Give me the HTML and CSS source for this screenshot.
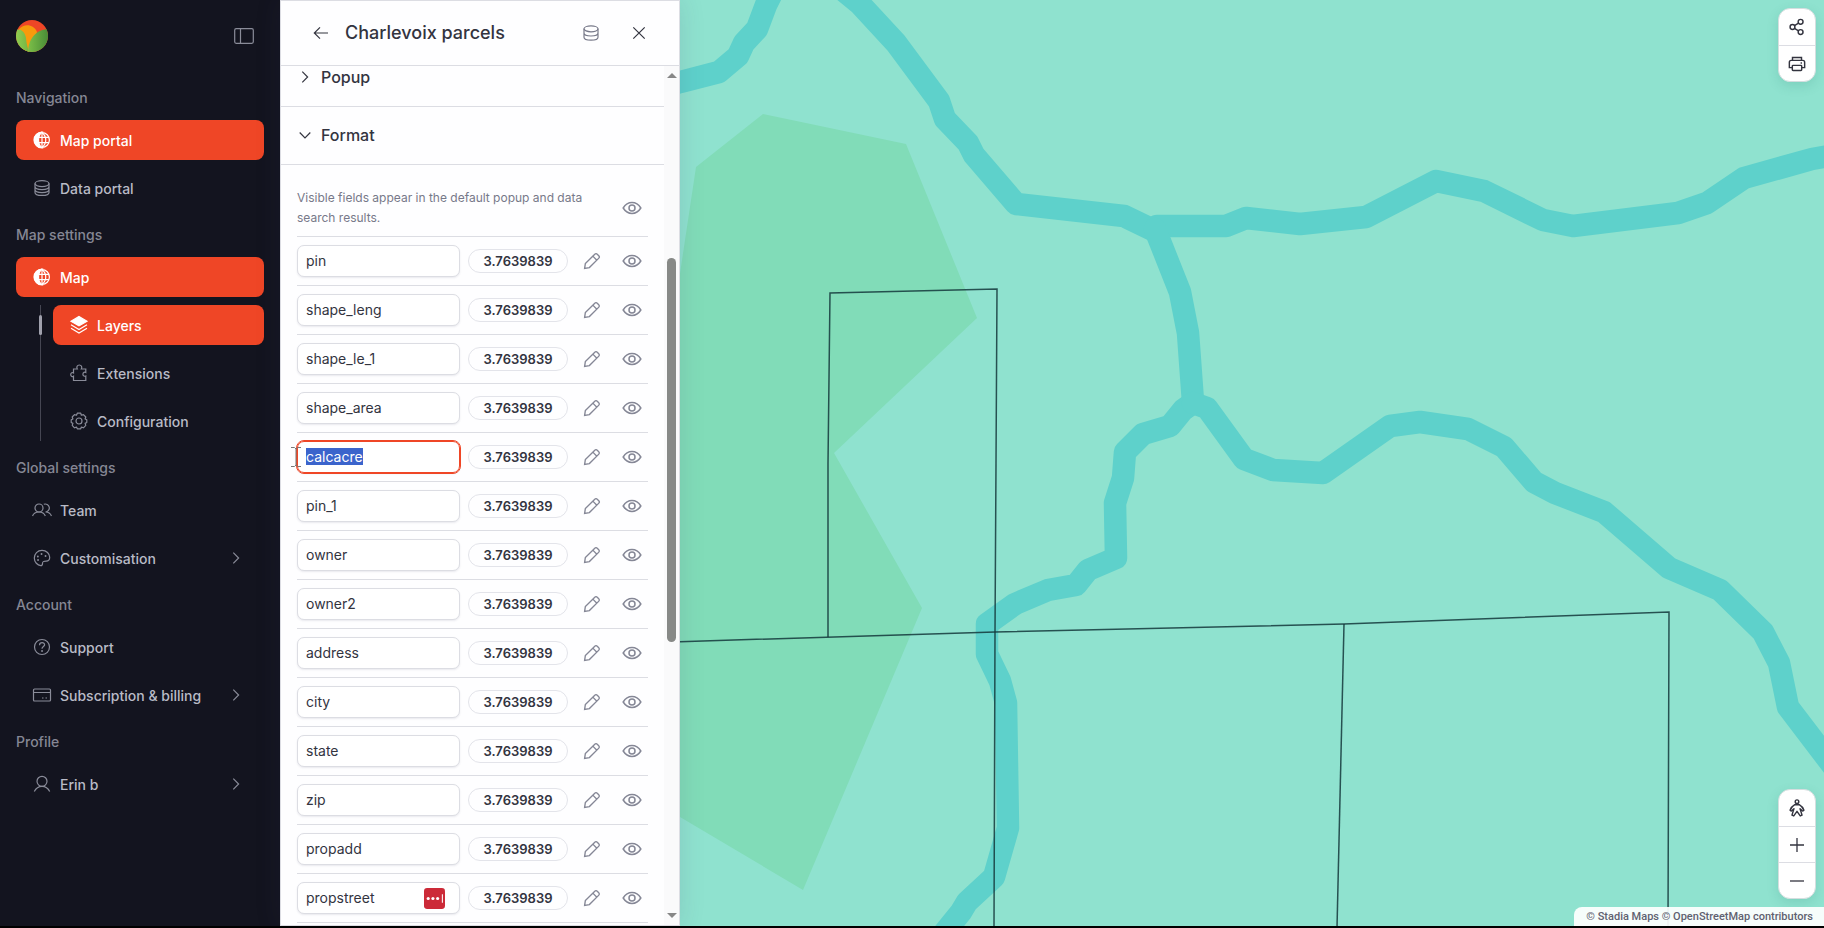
FILE: index.html
```html
<!DOCTYPE html>
<html lang="en">
<head>
    <meta charset="UTF-8">
    <meta name="viewport" content="width=device-width, initial-scale=1.0">
    <title>Charlevoix parcels</title>
    <link rel="stylesheet" href="styles.css">
</head>
<body>
    <svg class="sprite" aria-hidden="true">
        <symbol id="i-sidebar" viewBox="0 0 20 20"><rect x=".7" y="2.7" width="18.6" height="14.6" rx="1.5"/><path d="M6.5 3v14"/></symbol>
        <symbol id="i-globe" viewBox="0 0 20 20"><circle cx="10" cy="10" r="7.4"/><path d="M10 2.5c5 4 5 11 0 15M10 2.5v15M6 7.4h11M6 12.6h11"/><path class="solid" d="M10 2a8 8 0 0 0 0 16c-4.600-4-4.600-12 0-16z"/></symbol>
        <symbol id="i-data" viewBox="0 0 20 20"><ellipse cx="10" cy="5.600" rx="7" ry="3"/><path d="M3 5.600v8.800c0 4 14 4 14 0V5.600M3 8.600c0 4 14 4 14 0M3 11.600c0 4 14 4 14 0"/></symbol>
        <symbol id="i-database" viewBox="0 0 20 20"><ellipse cx="10" cy="5.800" rx="7" ry="3"/><path d="M3 5.800v8.400c0 4 14 4 14 0V5.800M3 10c0 4 14 4 14 0"/></symbol>
        <symbol id="i-layers" viewBox="0 0 20 20"><path class="solid" d="M10 1.500l8 4.700-8 4.700-8-4.700z"/><path d="M2 9.800l8 4.700 8-4.700M2 13.300l8 4.700 8-4.700"/></symbol>
        <symbol id="i-puzzle" viewBox="0 0 20 20"><path d="M4.500 17.500v-4.200c-1 .8-2.800.2-2.800-1.700s1.800-2.500 2.800-1.700V6h3.800C7.200 4.200 8.200 2 10.300 2s3.100 2.200 2 4h4.500v3.500c-1-.6-2.900-.2-2.900 1.700s1.900 2.400 2.900 1.800v4.500z"/></symbol>
        <symbol id="i-gear" viewBox="0 0 20 20"><circle cx="10" cy="10" r="3"/><path d="M8.300 2.200h3.400l.7 2 2-.6 2.400 2.400-.7 2 1.700.8v2.700l-1.700.9.700 2-2.400 2.400-2-.7-.7 1.700H8.300l-.8-1.700-2 .7-2.300-2.400.7-2-1.700-.9V8.800l1.700-.8-.7-2 2.300-2.400 2 .6z" stroke-linejoin="round"/></symbol>
        <symbol id="i-team" viewBox="0 0 20 20"><circle cx="7" cy="8" r="4"/><path d="M.5 16c1-2.700 3.500-4 6.500-4s5.300 1.300 6.300 4M11.800 4.300a4 4 0 1 1 1.700 7.700c3 0 5 1.300 6 4"/></symbol>
        <symbol id="i-palette" viewBox="0 0 20 20"><path d="M10 2.300c4.500 0 7.700 3.400 7.700 7 0 2.500-1.500 3.800-3.500 3.800-3 0-3.700.3-3.700 2.300 0 1.500-.7 2.200-1.700 2.200-3.300-.3-6.500-3.400-6.500-7.500 0-4.400 3.300-7.800 7.700-7.800z"/><path class="dots" d="M6 12h.1M5.800 8.500h.1M9.500 6h.1M13.500 8h.1"/></symbol>
        <symbol id="i-help" viewBox="0 0 20 20"><circle cx="10" cy="10" r="7.500"/><path d="M7.500 8.200c0-3.500 5.300-3.300 5.100-.3-.1 1.700-2.600 1.700-2.600 3.900"/><path class="dots" d="M10 14h.1"/></symbol>
        <symbol id="i-card" viewBox="0 0 20 20"><rect x="1.500" y="4" width="17" height="12" rx="1"/><path d="M1.500 7.500h17M10 13h1.500M13.500 13H15"/></symbol>
        <symbol id="i-user" viewBox="0 0 20 20"><circle cx="10" cy="7.300" r="5"/><path d="M2.300 17.500c1.700-3.500 4.500-5.200 7.700-5.200s6 1.700 7.700 5.200"/></symbol>
        <symbol id="i-right" viewBox="0 0 20 20"><path d="M7.300 4.700l5.300 5.300-5.300 5.300"/></symbol>
        <symbol id="i-down" viewBox="0 0 20 20"><path d="M4.700 7.500l5.300 5.300 5.300-5.300"/></symbol>
        <symbol id="i-back" viewBox="0 0 20 20"><path d="M17 10H3.300M9 4.300L3.300 10 9 15.700"/></symbol>
        <symbol id="i-close" viewBox="0 0 20 20"><path d="M4.300 4.300l11.400 11.400M15.700 4.300L4.300 15.700"/></symbol>
        <symbol id="i-eye" viewBox="0 0 20 20"><path d="M1.200 10c4.400-7.200 13.200-7.200 17.600 0-4.400 7.200-13.200 7.200-17.600 0z"/><circle cx="10" cy="10" r="3"/></symbol>
        <symbol id="i-pencil" viewBox="0 0 20 20"><path d="M1.800 18.200l.8-5.300L13.100 2.400c1-1 2-.6 2.700.1l1.700 1.700c.8.800.9 1.800.1 2.600L7.100 17.300zM10.900 4.600l4.500 4.500"/></symbol>
        <symbol id="i-share" viewBox="0 0 20 20"><circle cx="5" cy="10" r="2.700"/><circle cx="14" cy="4.200" r="2.700"/><circle cx="14" cy="15.600" r="2.700"/><path d="M7.200 8.500l4.500-2.800M7.200 11.500l4.500 2.700"/></symbol>
        <symbol id="i-print" viewBox="0 0 20 20"><path d="M5 6V2.700h10V6M5 14H1.500V8.300C1.500 7 2.300 6 3.500 6h13c1.200 0 2 1 2 2.300V14H15"/><rect x="4.800" y="11.500" width="10.400" height="5.800" rx=".8"/><path d="M14 8.800h1.500"/></symbol>
        <symbol id="i-person" viewBox="0 0 20 20"><circle cx="10" cy="3" r="2"/><path d="M7.500 6.300h5c2.600 1.500 4.300 3.700 5.200 6.200l-1.400.9-2.900-2.500 2.200 7-2 .9L10 13.700l-3.600 5.100-2-.9 2.200-7-2.900 2.500-1.400-.9c.9-2.500 2.600-4.700 5.200-6.200z" stroke-linejoin="round"/></symbol>
        <symbol id="i-plus" viewBox="0 0 20 20"><path d="M3 10h14M10 3v14"/></symbol>
        <symbol id="i-minus" viewBox="0 0 20 20"><path d="M3 10h14"/></symbol>
    </svg>

    <div class="app">
        <aside class="sidebar">
            <div class="sidebar-top">
                <svg class="logo" viewBox="0 0 32 32" aria-hidden="true">
                    <defs>
                        <clipPath id="logoClip"><circle cx="16" cy="16" r="16"/></clipPath>
                        <linearGradient id="leafLeft"><stop offset="0" stop-color="#93cf51"/><stop offset="1" stop-color="#72b443"/></linearGradient>
                        <linearGradient id="leafRight"><stop offset="0" stop-color="#7cbf48"/><stop offset="1" stop-color="#468a36"/></linearGradient>
                    </defs>
                    <g clip-path="url(#logoClip)">
                        <rect width="32" height="32" fill="#ee4626"/>
                        <path d="M3 9C8 3 18 4 21 12l-8 20H5z" fill="#f79a0c"/>
                        <path d="M-1 10c5-2 10 1 11 8 .5 4 .5 6 3 14H0z" fill="url(#leafLeft)"/>
                        <path d="M33 9c-10 0-21 7-21 24h21z" fill="url(#leafRight)"/>
                    </g>
                </svg>
                <button class="icon-btn" aria-label="Collapse sidebar"><svg class="icon"><use href="#i-sidebar"/></svg></button>
            </div>
            <nav>
                <h2 class="nav-label">Navigation</h2>
                <a class="nav-item active" href="#"><svg class="icon"><use href="#i-globe"/></svg>Map portal</a>
                <a class="nav-item" href="#"><svg class="icon"><use href="#i-data"/></svg>Data portal</a>

                <h2 class="nav-label">Map settings</h2>
                <a class="nav-item active" href="#"><svg class="icon"><use href="#i-globe"/></svg>Map</a>
                <div class="subnav">
                    <a class="nav-item active" href="#"><svg class="icon"><use href="#i-layers"/></svg>Layers</a>
                    <a class="nav-item" href="#"><svg class="icon"><use href="#i-puzzle"/></svg>Extensions</a>
                    <a class="nav-item" href="#"><svg class="icon"><use href="#i-gear"/></svg>Configuration</a>
                </div>

                <h2 class="nav-label">Global settings</h2>
                <a class="nav-item" href="#"><svg class="icon"><use href="#i-team"/></svg>Team</a>
                <a class="nav-item" href="#"><svg class="icon"><use href="#i-palette"/></svg>Customisation<svg class="icon chevron"><use href="#i-right"/></svg></a>

                <h2 class="nav-label">Account</h2>
                <a class="nav-item" href="#"><svg class="icon"><use href="#i-help"/></svg>Support</a>
                <a class="nav-item" href="#"><svg class="icon"><use href="#i-card"/></svg>Subscription &amp; billing<svg class="icon chevron"><use href="#i-right"/></svg></a>

                <h2 class="nav-label">Profile</h2>
                <a class="nav-item" href="#"><svg class="icon"><use href="#i-user"/></svg>Erin b<svg class="icon chevron"><use href="#i-right"/></svg></a>
            </nav>
        </aside>

        <section class="panel">
            <header class="panel-header">
                <button class="icon-btn" aria-label="Back"><svg class="icon"><use href="#i-back"/></svg></button>
                <h1>Charlevoix parcels</h1>
                <button class="icon-btn data" aria-label="Open data"><svg class="icon"><use href="#i-database"/></svg></button>
                <button class="icon-btn" aria-label="Close"><svg class="icon"><use href="#i-close"/></svg></button>
            </header>
            <div class="panel-body">
                <div class="panel-scroll">
                    <div class="panel-content">
                        <button class="section-toggle"><svg class="icon"><use href="#i-right"/></svg>Popup</button>
                        <button class="section-toggle"><svg class="icon"><use href="#i-down"/></svg>Format</button>
                        <div class="fields">
                            <div class="fields-intro">
                                <p>Visible fields appear in the default popup and data search results.</p>
                                <button class="icon-btn eye" aria-label="Toggle all fields"><svg class="icon"><use href="#i-eye"/></svg></button>
                            </div>
                            <div id="fieldRows"></div>
                        </div>
                    </div>
                </div>
                <div class="scrollbar" aria-hidden="true">
                    <span class="arrow up"></span>
                    <span class="gap-above"></span>
                    <span class="thumb"></span>
                    <span class="gap-below"></span>
                    <span class="arrow down"></span>
                </div>
            </div>
        </section>

        <main class="map">
            <svg class="map-canvas" viewBox="680 0 1144 926" preserveAspectRatio="xMinYMin slice" role="img" aria-label="Parcel map">
                <path class="park" d="M696 167L763 114 906 144 977 318 834 453 922 608 803 890 670 811V340z"/>
                <g class="river">
                    <path d="M776-15L766 5 757 29 744 43 738 56 719 72 680 82 660 88"/>
                    <path d="M838-14L860 4 896 43 939 101 945 119 968 143 974 155 1016 204 1124 216 1153 230"/>
                    <path d="M1157 226H1226L1246 218 1300 224 1366 217 1436 181 1484 191 1543 220 1573 226 1678 213 1707 203 1744 178 1812 159 1840 154"/>
                    <path d="M1155 229L1180 292 1188 333 1193 402"/>
                    <path d="M1190 405L1183 410 1170 426 1143 434 1125 452 1123 478 1115 503 1116 558 1088 570 1076 585 1048 590 1015 604 987 624V654L1000 681 1006 703 1008 828 994 877 967 902 961 912 940 938"/>
                    <path d="M1193 403L1207 408 1244 459 1273 470 1323 473 1390 426 1420 422 1468 429 1504 447 1534 482 1555 493 1604 512 1669 568 1720 590 1763 632 1779 663 1788 707 1836 770"/>
                </g>
                <g class="parcel">
                    <path d="M828 637V464L830 293 997 289 996 464 995 632 994 928"/>
                    <path d="M670 642L995 632 1260 626 1344 624 1669 612 1668 928"/>
                    <path d="M1344 624L1337 928"/>
                </g>
            </svg>
            <div class="controls top">
                <button aria-label="Share"><svg class="icon"><use href="#i-share"/></svg></button>
                <button aria-label="Print"><svg class="icon"><use href="#i-print"/></svg></button>
            </div>
            <div class="controls bottom">
                <button aria-label="Street view"><svg class="icon"><use href="#i-person"/></svg></button>
                <button aria-label="Zoom in"><svg class="icon zoom"><use href="#i-plus"/></svg></button>
                <button aria-label="Zoom out"><svg class="icon zoom"><use href="#i-minus"/></svg></button>
            </div>
            <div class="attribution"><a href="#">© Stadia Maps</a> <a href="#">© OpenStreetMap contributors</a></div>
        </main>
    </div>

    <script>
        const fields = ['pin', 'shape_leng', 'shape_le_1', 'shape_area', 'calcacre', 'pin_1', 'owner',
            'owner2', 'address', 'city', 'state', 'zip', 'propadd', 'propstreet'];

        // Autofill badge of the password manager
        const autofill = `
            <svg class="autofill" viewBox="0 0 20 20" aria-hidden="true">
                <rect width="20" height="20" rx="3"/>
                <circle cx="4" cy="10" r="1.500"/><circle cx="8.500" cy="10" r="1.500"/><circle cx="13" cy="10" r="1.500"/>
                <path d="M17.500 6v8"/>
            </svg>`;

        // I-beam pointer at the start of the edited field
        const pointer = `
            <svg class="pointer" viewBox="0 0 10 20" aria-hidden="true">
                <path d="M0 .5h3.500L5 2l1.500-1.500H10M0 19.500h3.500L5 18l1.500 1.500H10M5 2v16"/>
            </svg>`;

        document.getElementById('fieldRows').innerHTML = fields.map(name => `
            <div class="field-row">
                <div class="field">
                    <input type="text" id="field-${name}" value="${name}" aria-label="Label for ${name}" spellcheck="false">
                    ${name === 'propstreet' ? autofill : ''}
                    ${name === 'calcacre' ? pointer : ''}
                </div>
                <button class="format">3.7639839</button>
                <button class="icon-btn pencil" aria-label="Edit ${name}"><svg class="icon"><use href="#i-pencil"/></svg></button>
                <button class="icon-btn eye" aria-label="Toggle ${name}"><svg class="icon"><use href="#i-eye"/></svg></button>
            </div>`).join('');

        const current = document.getElementById('field-calcacre');
        current.focus({ preventScroll: true });
        current.select();
    </script>
</body>
</html>
```
FILE: styles.css
```css
* {
    box-sizing: border-box;
}
body {
    margin: 0;
    background: #000;
    color: #33343f;
    font-family: Inter, "Liberation Sans", sans-serif;
    font-size: 14px;
}
h1, h2, p {
    margin: 0;
    font-weight: 500;
}
a {
    color: inherit;
    text-decoration: none;
}
button {
    font: inherit;
    color: inherit;
    background: none;
    border: 0;
    padding: 0;
    cursor: pointer;
}
.sprite {
    display: none;
}
.icon {
    display: block;
    flex: none;
    width: 20px;
    height: 20px;
    fill: none;
    stroke: currentColor;
    stroke-width: 1.2;
}
.solid {
    fill: currentColor;
}
.dots {
    stroke-width: 1.8;
    stroke-linecap: round;
}
.icon-btn {
    flex: none;
}
.app {
    display: flex;
    height: calc(100vh - 2px);
    overflow: hidden;
}

/* Sidebar */
.sidebar {
    flex: none;
    width: 280px;
    padding: 20px 16px;
    background: #13141f;
    color: #b9bbc6;
}
.sidebar-top {
    display: flex;
    align-items: center;
    justify-content: space-between;
    height: 32px;
    margin-bottom: 23px;
    padding-right: 10px;
}
.sidebar-top .icon-btn {
    color: #8a8c99;
}
.logo {
    width: 32px;
    height: 32px;
}
.nav-label {
    height: 41px;
    line-height: 46px;
    font-size: 14px;
    font-weight: 500;
    color: #858794;
}
.nav-item {
    display: flex;
    align-items: center;
    gap: 8px;
    height: 40px;
    margin: 4px 0;
    padding: 0 18px 0 16px;
    border-radius: 8px;
    font-size: 14px;
    font-weight: 500;
}
.nav-item + .nav-item,
.nav-item + .subnav {
    margin-top: 8px;
}
.nav-item .icon {
    color: #8a8c99;
}
.nav-item.active,
.nav-item.active .icon {
    color: #fff;
}
.nav-item.active {
    background: #ef4626;
}
.chevron {
    margin-left: auto;
}
.subnav {
    position: relative;
    margin-left: 24px;
    padding-left: 12px;
    border-left: 1px solid #454652;
}
.subnav .nav-item:first-child {
    margin-top: 0;
}
.subnav::before {
    content: "";
    position: absolute;
    left: -2px;
    top: 10px;
    width: 3px;
    height: 20px;
    border-radius: 2px;
    background: #a0a1ad;
}

/* Layer panel */
.panel {
    display: flex;
    flex-direction: column;
    flex: none;
    width: 400px;
    background: #fefeff;
    border: 1px solid #dcdde3;
    position: relative;
    box-shadow: 0 0 24px rgba(60, 60, 100, 0.14);
    z-index: 1;
}
.panel-header {
    display: flex;
    align-items: center;
    flex: none;
    height: 65px;
    padding: 0 30px;
    border-bottom: 1px solid #dcdde3;
    gap: 28px;
}
.panel-header h1 {
    flex: 1;
    margin-left: -14px;
    font-size: 18px;
    line-height: 24px;
}
.panel-header .data {
    color: #777989;
}
.panel-body {
    display: flex;
    flex: 1;
    min-height: 0;
}
.panel-scroll {
    flex: 1;
    overflow: hidden;
}
/* scrolled part of the way into the Popup heading */
.panel-content {
    margin-top: -17px;
}
.section-toggle {
    display: flex;
    align-items: center;
    gap: 6px;
    width: 100%;
    height: 58px;
    padding: 0 14px 2px;
    border-bottom: 1px solid #dcdde3;
    font-size: 16px;
    font-weight: 500;
}
.fields {
    padding: 22px 16px 0;
}
.fields-intro,
.field-row {
    display: flex;
    align-items: center;
    width: 100%;
    border-bottom: 1px solid #dcdde3;
}
.fields-intro {
    justify-content: space-between;
    height: 50px;
    padding: 0 6px 7px 0;
}
.fields-intro p {
    width: 300px;
    font-size: 12px;
    line-height: 20px;
    font-weight: 400;
    color: #777989;
}
.field-row {
    height: 49px;
    padding: 0 6px 1px 0;
}
.field {
    position: relative;
    width: 163px;
}
.field input {
    display: block;
    width: 100%;
    height: 32px;
    padding: 0 8px;
    border: 1px solid #dcdde3;
    border-radius: 7px;
    background: #fff;
    box-shadow: 0 1px 2px rgba(50, 50, 90, 0.1);
    color: #33343f;
    font: 400 14px/22px Inter, "Liberation Sans", sans-serif;
}
.field input:focus {
    outline: 1px solid #ef4626;
    border-color: #ef4626;
}
.field input::selection {
    background: rgba(57, 98, 203, 0.99);
    color: #fff;
}
.autofill {
    position: absolute;
    top: 6px;
    right: 15px;
    width: 21px;
    height: 21px;
    fill: #fff;
    stroke: none;
}
.autofill rect {
    fill: #cc2a38;
}
.autofill path {
    stroke: #fff;
}
.pointer {
    position: absolute;
    top: 6px;
    left: -6px;
    width: 10px;
    height: 20px;
    fill: none;
    stroke: #777;
}
.format {
    width: 100px;
    height: 24px;
    margin: 0 15px 0 8px;
    border: 1px solid #e3e4ea;
    border-radius: 12px;
    font-size: 13px;
    font-weight: 600;
}
.pencil,
.eye {
    color: #858796;
}
.pencil .icon,
.eye .icon {
    stroke-width: 1.5;
}
.pencil .icon {
    width: 18px;
    height: 18px;
}
.field-row .eye {
    margin-left: auto;
}
.scrollbar {
    display: flex;
    flex-direction: column;
    align-items: center;
    flex: none;
    width: 15px;
    padding: 7px 0;
    background: #fafafb;
}
.thumb {
    flex: 382;
    width: 9px;
    border-radius: 5px;
    background: #878987;
}
.gap-above {
    flex: 179;
}
.gap-below {
    flex: 269;
}
.arrow {
    border: 5px solid transparent;
}
.arrow.up {
    border-top: 0;
    border-bottom-color: #878787;
}
.arrow.down {
    border-bottom: 0;
    border-top-color: #878787;
}

/* Map */
.map {
    position: relative;
    flex: 1;
    min-width: 0;
    background: #8fe2cf;
}
.map-canvas {
    display: block;
    width: 100%;
    height: 100%;
}
.park {
    fill: #81dcb8;
}
.river {
    fill: none;
    stroke: #5ed1cb;
    stroke-width: 22.5;
    stroke-linejoin: round;
    stroke-linecap: round;
}
.parcel {
    fill: none;
    stroke: #14373b;
    stroke-opacity: 0.85;
    stroke-width: 1.5;
}
.controls {
    position: absolute;
    right: 8px;
    width: 38px;
    border: 1px solid #d5dedf;
    border-radius: 12px;
    background: #fff;
    box-shadow: 0 4px 12px rgba(30, 120, 100, 0.16);
}
.controls.top {
    top: 8px;
}
.controls.bottom {
    bottom: 27px;
}
.controls button {
    display: flex;
    align-items: center;
    justify-content: center;
    width: 100%;
    height: 36px;
}
.controls button + button {
    border-top: 1px solid #dcdde3;
}
.controls .icon {
    width: 18px;
    height: 18px;
    stroke-width: 1.6;
}
.controls .zoom {
    width: 20px;
    height: 20px;
    stroke-width: 1.3;
}
.attribution {
    position: absolute;
    right: 0;
    bottom: 0;
    padding: 0 11px 0 12px;
    border-radius: 8px 0 0 0;
    background: rgba(255, 255, 255, 0.92);
    color: #5f6170;
    font-family: Roboto, sans-serif;
    font-size: 11px;
    line-height: 19px;
    font-weight: 500;
}
```
